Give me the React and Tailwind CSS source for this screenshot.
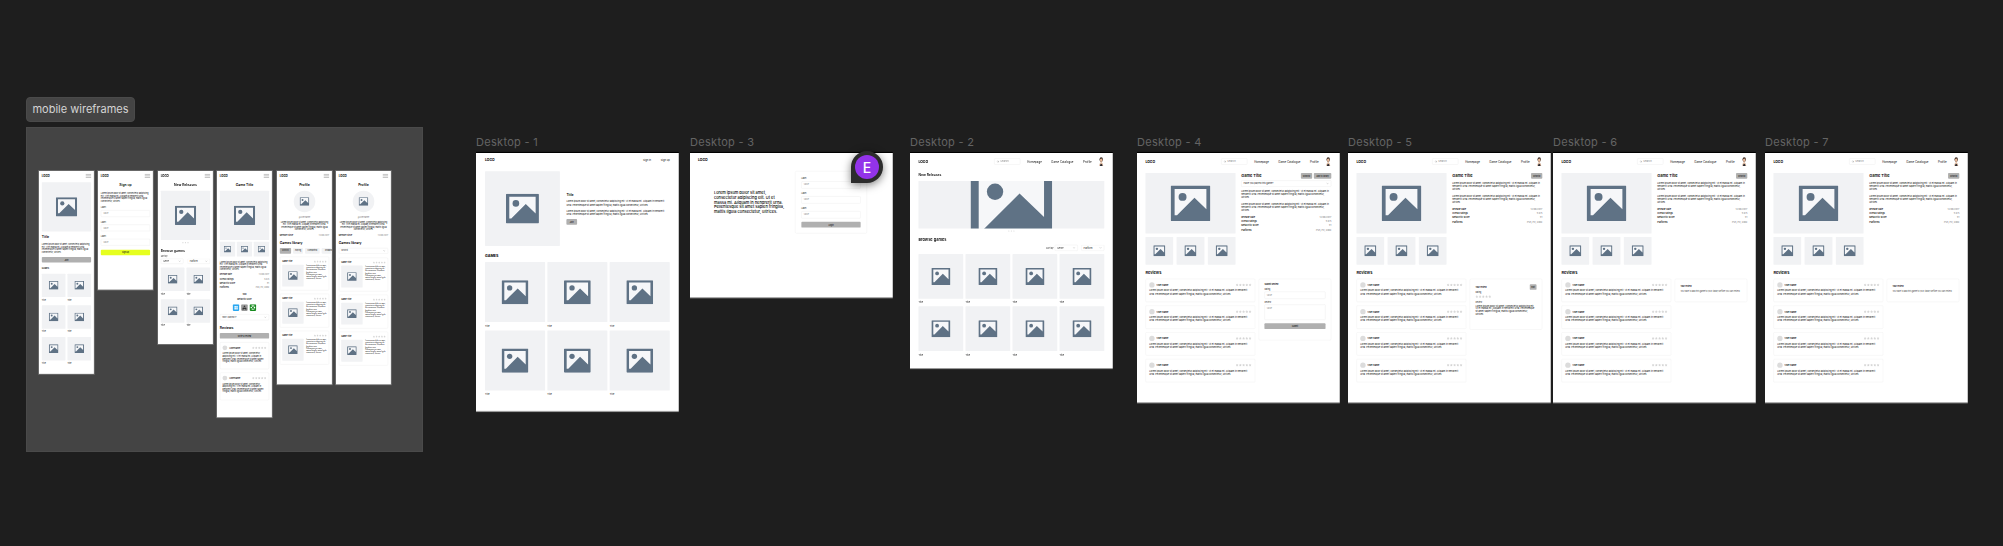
import React from 'react';
import { Search, ChevronDown, Star } from 'lucide-react';

const LOREM = 'Lorem ipsum dolor sit amet, consectetur adipiscing elit. Ut et massa mi. Aliquam in hendrerit urna. Pellentesque sit amet sapien fringilla, mattis ligula consectetur, ultrices.';

// placeholder picture glyph
const PicIcon = ({ className = '' }) => (
  <svg viewBox="0 0 100 90" className={`shrink-0 ${className}`}>
    <rect x="8" y="7" width="84" height="70" fill="#f6f7f9" />
    <path fillRule="evenodd" fill="#5f7285" d="M3 0h94a3 3 0 0 1 3 3v84a3 3 0 0 1-3 3H3a3 3 0 0 1-3-3V3a3 3 0 0 1 3-3zM10 9v66h6l44-44 30 29V9z" />
    <circle cx="30" cy="29" r="10" fill="#5f7285" />
  </svg>
);

const Tile = ({ className = '', icon = '' }) => (
  <div className={`flex items-center justify-center overflow-hidden rounded-[4px] bg-[#f1f2f4] ${className}`}>
    <PicIcon className={icon} />
  </div>
);

const Stars = ({ className = 'w-[16px] h-[16px]' }) => (
  <div className="flex gap-[3px]">
    {[0, 1, 2, 3, 4].map(i => (
      <Star key={i} className={`${className} fill-[#d9d9d9] text-[#d9d9d9]`} />
    ))}
  </div>
);

const Dots = () => (
  <div className="flex justify-center gap-[10px]">
    {[0, 1, 2].map(i => (
      <span key={i} className="h-[8px] w-[8px] rounded-full bg-[#d4d4d4]" />
    ))}
  </div>
);

const SelectBox = ({ label, className = '', text = 'text-[16px]' }) => (
  <div className={`flex items-center justify-between rounded-[6px] border-[3px] border-[#ececec] bg-white px-[14px] text-[#222] ${text} ${className}`}>
    <span>{label}</span>
    <ChevronDown className="h-[20px] w-[20px] text-[#666]" />
  </div>
);

const Field = ({ label = 'Label', value = 'Value', box = 'h-[52px]', labelClass = 'text-[14px] leading-[20px]', gap = 'mt-[10px]' }) => (
  <div>
    <div className={`text-[#222] ${labelClass}`}>{label}</div>
    <div className={`${gap} rounded-[6px] border-[3px] border-[#ececec] px-[14px] py-[11px] text-[14px] leading-[20px] text-[#888] ${box}`}>{value}</div>
  </div>
);

const GrayButton = ({ children, className = '' }) => (
  <div className={`flex items-center justify-center rounded-[6px] bg-[#b0b0b0] font-medium text-[#111] ${className}`}>{children}</div>
);

const Face = () => (
  <svg viewBox="0 0 44 64" className="h-[64px] w-[44px]">
    <ellipse cx="22" cy="18" rx="12" ry="16" fill="#3a2a22" />
    <ellipse cx="22" cy="21" rx="9" ry="11" fill="#e8b899" />
    <rect x="18" y="30" width="8" height="10" fill="#dba988" />
    <path d="M8 64c0-14 6-26 14-26s14 12 14 26z" fill="#d8b69d" />
    <path d="M13 64c1-9 4-14 9-14s8 5 9 14z" fill="#2c2c33" />
  </svg>
);

const Logo = () => <span className="text-[24px] font-bold leading-[32px] text-black">LOGO</span>;

const AppHeader = () => (
  <div className="flex h-[45px] items-center justify-between">
    <Logo />
    <div className="flex items-center text-[20px] text-[#111]">
      <div className="flex h-[45px] w-[186px] items-center gap-[8px] rounded-[6px] border-[3px] border-[#ececec] px-[14px] text-[18px] text-[#888]">
        <Search className="h-[18px] w-[18px]" />
        <span>Search</span>
      </div>
      <span className="ml-[48px]">Homepage</span>
      <span className="ml-[68px]">Game Catalogue</span>
      <span className="ml-[68px]">Profile</span>
      <div className="ml-[46px]"><Face /></div>
    </div>
  </div>
);

const GameTile = ({ size, icon }) => (
  <div>
    <Tile className={size} icon={icon} />
    <div className="mt-[16px] text-[16px] leading-[20px] text-[#111]">Title</div>
  </div>
);

const InfoRows = ({ className = 'gap-[11px] text-[16px] leading-[20px]' }) => (
  <div className={`flex flex-col ${className}`}>
    {[['Release date', '12/08/2017'], ['Overall ratings', '5.0/5'], ['Metacritic score', '91'], ['Platforms', 'PS5, PC, Xbox']].map(([k, v]) => (
      <div key={k} className="flex justify-between">
        <span className="font-medium text-black">{k}</span>
        <span className="text-[#777]">{v}</span>
      </div>
    ))}
  </div>
);

const ReviewCard = () => (
  <div className="h-[166px] rounded-[8px] border-[3px] border-[#efefef] px-[24px] pt-[22px]">
    <div className="flex items-center justify-between">
      <div className="flex items-center gap-[14px]">
        <span className="h-[38px] w-[38px] rounded-full bg-[#dcdcdc]" />
        <span className="text-[16px] font-semibold text-black">User name</span>
      </div>
      <Stars className="h-[20px] w-[20px]" />
    </div>
    <p className="mt-[10px] text-[16px] leading-[22px] text-black">{LOREM}</p>
  </div>
);

// the game page shared by Desktop 4 to 7, the top right action and the side card change
const GamePage = ({ actions, beforeText, side }) => (
  <div className="px-[60px] pt-[38px]">
    <AppHeader />
    <div className="mt-[59px] flex gap-[40px]">
      <div className="w-[640px]">
        <Tile className="h-[430px]" icon="w-[282px]" />
        <div className="mt-[24px] grid grid-cols-3 gap-[24px]">
          <Tile className="h-[197px]" icon="w-[85px]" />
          <Tile className="h-[197px]" icon="w-[85px]" />
          <Tile className="h-[197px]" icon="w-[85px]" />
        </div>
      </div>
      <div className="w-[640px]">
        <div className="flex items-center justify-between">
          <h3 className="text-[28px] font-semibold leading-[40px] text-black">Game Title</h3>
          <div className="flex gap-[12px]">{actions}</div>
        </div>
        {beforeText}
        <p className="mt-[20px] text-[16px] leading-[22px] text-black">{LOREM}</p>
        <p className="mt-[28px] text-[16px] leading-[22px] text-black">{LOREM}</p>
        <div className="mt-[24px]"><InfoRows /></div>
      </div>
    </div>
    <h3 className="mt-[40px] text-[28px] font-semibold leading-[36px] text-black">Reviews</h3>
    <div className="mt-[24px] flex items-start gap-[24px]">
      <div className="flex w-[780px] flex-col gap-[24px]">
        <ReviewCard />
        <ReviewCard />
        <ReviewCard />
        <ReviewCard />
      </div>
      <div className="w-[516px]">{side}</div>
    </div>
  </div>
);

const SmallAction = ({ children, className = 'w-[80px]' }) => (
  <GrayButton className={`h-[40px] text-[14px] ${className}`}>{children}</GrayButton>
);

const SideCard = ({ children, className = '' }) => (
  <div className={`rounded-[10px] border-[3px] border-[#efefef] px-[38px] ${className}`}>{children}</div>
);

const Hamburger = () => (
  <div className="flex w-[38px] flex-col gap-[8px]">
    <span className="h-[4px] bg-[#999]" />
    <span className="h-[4px] bg-[#999]" />
    <span className="h-[4px] bg-[#999]" />
  </div>
);

const MobileHeader = () => (
  <div className="flex h-[36px] items-center justify-between">
    <span className="text-[20px] font-bold text-black">LOGO</span>
    <Hamburger />
  </div>
);

const MobileTitle = ({ children }) => (
  <h3 className="mt-[34px] text-center text-[24px] font-semibold leading-[28px] text-black">{children}</h3>
);

const MobileTile = () => (
  <div>
    <Tile className="h-[166px]" icon="w-[68px]" />
    <div className="mt-[13px] text-[14px] leading-[18px] text-[#111]">Title</div>
  </div>
);

const MobileReview = ({ className = '' }) => (
  <div className={`rounded-[8px] border-[3px] border-[#efefef] px-[16px] pt-[20px] ${className}`}>
    <div className="flex items-center justify-between">
      <div className="flex items-center gap-[14px]">
        <span className="h-[34px] w-[34px] rounded-full bg-[#dcdcdc]" />
        <span className="text-[16px] font-medium text-black">Username</span>
      </div>
      <Stars className="h-[18px] w-[18px]" />
    </div>
    <p className="mt-[16px] text-[14px] leading-[18px] text-black">{LOREM}</p>
  </div>
);

const LibraryCard = () => (
  <div className="h-[241px] rounded-[8px] border-[3px] border-[#efefef] px-[14px] pt-[22px]">
    <div className="flex items-center justify-between">
      <span className="text-[14px] font-semibold leading-[20px] text-black">Game Title</span>
      <Stars className="h-[16px] w-[16px]" />
    </div>
    <div className="mt-[12px] flex gap-[18px]">
      <Tile className="h-[156px] w-[152px] shrink-0" icon="w-[68px]" />
      <p className="text-[11px] leading-[15px] text-black">{LOREM}</p>
    </div>
  </div>
);

const ProfileHead = () => (
  <>
    <MobileTitle>Profile</MobileTitle>
    <div className="mx-auto mt-[25px] flex h-[153px] w-[153px] items-center justify-center rounded-full bg-[#f1f2f4]">
      <PicIcon className="w-[68px]" />
    </div>
    <div className="mt-[26px] text-center text-[14px] leading-[20px] text-[#777]">@username</div>
    <p className="mt-[16px] text-center text-[14px] leading-[17px] text-black">{LOREM}</p>
    <div className="mt-[22px] flex justify-between text-[14px] leading-[20px]">
      <span className="font-medium text-black">Member since</span>
      <span className="text-[#777]">12/08/2017</span>
    </div>
    <h3 className="mt-[30px] text-[24px] font-semibold leading-[28px] text-black">Games library</h3>
  </>
);

const Label = ({ className, children }) => (
  <div className={`absolute whitespace-nowrap text-[11px] leading-[14px] tracking-[0.3px] text-[#646464] ${className}`}>{children}</div>
);

const Frame = ({ className, height, children }) => (
  <div className={`absolute ${className}`}>
    <div className={`w-[1440px] origin-top-left scale-[0.1408] overflow-hidden bg-white shadow-[0_8px_0_#9a9a9a,0_-8px_0_#000] ${height}`}>
      {children}
    </div>
  </div>
);

const MobileFrame = ({ className, height, children }) => (
  <div className={`absolute ${className}`}>
    <div className={`w-[390px] origin-top-left scale-[0.1408] overflow-hidden bg-white px-[20px] pt-[17px] shadow-[0_0_0_6px_#707070] ${height}`}>
      {children}
    </div>
  </div>
);

export default function App() {
  return (
    <div className="relative h-[546px] w-[2003px] overflow-hidden bg-[#1e1e1e] font-['Inter',sans-serif]">
      {/* mobile section */}
      <div className="absolute left-[26px] top-[97px] flex h-[25px] w-[109px] items-center justify-center whitespace-nowrap rounded-[4px] border border-[#4a4a4a] bg-[#444444] text-[11px] text-[#d4d4d4]">
        mobile wireframes
      </div>
      <div className="absolute left-[26px] top-[127px] h-[325px] w-[397px] border border-[#4a4a4a] bg-[#444444]" />

      <MobileFrame className="left-[38.5px] top-[170.5px]" height="h-[1441px]">
        <MobileHeader />
        <Tile className="mt-[27px] h-[350px]" icon="w-[151px]" />
        <h3 className="mt-[25px] text-[24px] font-semibold leading-[28px] text-black">Title</h3>
        <p className="mt-[28px] text-[14px] leading-[19px] text-black">{LOREM}</p>
        <GrayButton className="mt-[24px] h-[38px] text-[14px]">Join</GrayButton>
        <div className="mt-[34px] text-[14px] font-semibold leading-[20px] text-black">GAMES</div>
        <div className="mt-[26px] grid grid-cols-2 gap-x-[14px] gap-y-[28px]">
          {[0, 1, 2, 3, 4, 5].map(i => <MobileTile key={i} />)}
        </div>
      </MobileFrame>

      <MobileFrame className="left-[98px] top-[170.5px]" height="h-[843px]">
        <MobileHeader />
        <MobileTitle>Sign up</MobileTitle>
        <p className="mt-[37px] text-[14px] leading-[18px] text-black">{LOREM}</p>
        <div className="mt-[26px] flex flex-col gap-[26px]">
          <Field box="h-[48px]" labelClass="text-[14px] leading-[18px]" />
          <Field box="h-[48px]" labelClass="text-[14px] leading-[18px]" />
          <Field box="h-[48px]" labelClass="text-[14px] leading-[18px]" />
        </div>
        <div className="mt-[30px] flex h-[38px] items-center justify-center rounded-[6px] bg-[#e6ff1f] text-[14px] font-medium text-[#111]">Sign up</div>
      </MobileFrame>

      <MobileFrame className="left-[157.5px] top-[170.5px]" height="h-[1229px]">
        <MobileHeader />
        <MobileTitle>New Releases</MobileTitle>
        <Tile className="mt-[25px] h-[350px]" icon="w-[151px]" />
        <div className="mt-[15px]"><Dots /></div>
        <h3 className="mt-[40px] text-[24px] font-semibold leading-[28px] text-black">Browse games</h3>
        <div className="mt-[16px] text-[14px] leading-[18px] text-[#222]">Sort by</div>
        <div className="mt-[7px] flex justify-between">
          <SelectBox label="Genre" className="h-[38px] w-[161px]" text="text-[14px]" />
          <SelectBox label="Platform" className="h-[38px] w-[161px]" text="text-[14px]" />
        </div>
        <div className="mt-[26px] grid grid-cols-2 gap-x-[14px] gap-y-[28px]">
          {[0, 1, 2, 3].map(i => <MobileTile key={i} />)}
        </div>
      </MobileFrame>

      <MobileFrame className="left-[217px] top-[170.5px]" height="h-[1749px]">
        <MobileHeader />
        <MobileTitle>Game Title</MobileTitle>
        <Tile className="mt-[25px] h-[350px]" icon="w-[151px]" />
        <div className="mt-[12px] grid grid-cols-3 gap-[12px]">
          <Tile className="h-[106px]" icon="w-[50px]" />
          <Tile className="h-[106px]" icon="w-[50px]" />
          <Tile className="h-[106px]" icon="w-[50px]" />
        </div>
        <p className="mt-[28px] text-[14px] leading-[18px] text-black">{LOREM}</p>
        <div className="mt-[20px]"><InfoRows className="gap-[12px] text-[14px] leading-[18px]" /></div>
        <div className="mt-[32px] text-center text-[16px] font-semibold leading-[20px] text-black">100</div>
        <div className="mt-[12px] text-center text-[13px] font-medium leading-[18px] text-black">Metacritic Score</div>
        <div className="mt-[28px] flex justify-center gap-[12px]">
          <svg viewBox="0 0 48 48" className="h-[48px] w-[48px]">
            <rect width="48" height="48" rx="8" fill="#2aa7f0" />
            <path d="M13 12h10v11H13zM26 12h10v11H26zM13 26h10v11H13zM26 26h10v11H26z" fill="#fff" />
          </svg>
          <svg viewBox="0 0 48 48" className="h-[48px] w-[48px]">
            <rect width="48" height="48" rx="8" fill="#9a9a9a" />
            <path d="M24 8l8 14h-6l-2-4-2 4h-6zM12 26h24l4 12h-10l-6-6-6 6H8z" fill="#333" />
          </svg>
          <svg viewBox="0 0 48 48" className="h-[48px] w-[48px]">
            <rect width="48" height="48" rx="8" fill="#168a1e" />
            <circle cx="24" cy="24" r="16" fill="#fff" />
            <path d="M24 20l-9-9-5 6 10 7-10 8 5 5 9-9 9 9 5-5-10-8 10-7-5-6z" fill="#168a1e" />
          </svg>
        </div>
        <SelectBox label="Have I played it?" className="mt-[23px] h-[43px]" text="text-[13px]" />
        <h3 className="mt-[38px] text-[24px] font-semibold leading-[28px] text-black">Reviews</h3>
        <GrayButton className="mt-[24px] h-[40px] text-[14px]">Write a review</GrayButton>
        <MobileReview className="mt-[26px] h-[192px]" />
        <MobileReview className="mt-[23px] h-[197px]" />
      </MobileFrame>

      <MobileFrame className="left-[276.5px] top-[170.5px]" height="h-[1515px]">
        <MobileHeader />
        <ProfileHead />
        <div className="mt-[24px] flex gap-[14px] text-[13px] text-[#111]">
          <div className="flex h-[40px] w-[80px] shrink-0 items-center justify-center rounded-[6px] bg-[#b0b0b0]">Wishlist</div>
          <div className="flex h-[40px] w-[71px] shrink-0 items-center justify-center rounded-[6px] bg-[#f1f2f4]">Playing</div>
          <div className="flex h-[40px] w-[104px] shrink-0 items-center justify-center rounded-[6px] bg-[#f1f2f4]">Completed</div>
          <div className="flex h-[40px] w-[100px] shrink-0 items-center justify-center rounded-[6px] bg-[#f1f2f4]">Dropped</div>
        </div>
        <div className="mt-[21px] flex flex-col gap-[22px]">
          <LibraryCard />
          <LibraryCard />
          <LibraryCard />
        </div>
      </MobileFrame>

      <MobileFrame className="left-[336px] top-[170.5px]" height="h-[1515px]">
        <MobileHeader />
        <ProfileHead />
        <SelectBox label="Wishlist" className="mt-[24px] h-[40px]" text="text-[13px]" />
        <div className="mt-[28px] flex flex-col gap-[22px]">
          <LibraryCard />
          <LibraryCard />
          <LibraryCard />
        </div>
      </MobileFrame>

      {/* desktop frames */}
      <Label className="left-[476px] top-[135px]">Desktop - 1</Label>
      <Frame className="left-[476px] top-[153px]" height="h-[1832px]">
        <div className="px-[64px] pt-[36px]">
          <div className="flex h-[32px] items-center justify-between">
            <Logo />
            <div className="flex gap-[68px] text-[18px] text-[#111]">
              <span>Sign in</span>
              <span>Sign up</span>
            </div>
          </div>
          <div className="mt-[62px] flex items-center gap-[46px]">
            <Tile className="h-[530px] w-[532px] shrink-0" icon="w-[234px]" />
            <div>
              <h3 className="text-[24px] font-semibold leading-[32px] text-black">Title</h3>
              <p className="mt-[20px] text-[16px] leading-[23px] text-black">{LOREM}</p>
              <p className="mt-[24px] text-[16px] leading-[23px] text-black">{LOREM}</p>
              <GrayButton className="mt-[20px] h-[40px] w-[76px] text-[14px]">Join</GrayButton>
            </div>
          </div>
          <h3 className="mt-[56px] text-[26px] font-bold leading-[32px] text-black">GAMES</h3>
          <div className="mt-[27px] grid grid-cols-3 gap-x-[16px] gap-y-[24px]">
            {[0, 1, 2, 3, 4, 5].map(i => (
              <GameTile key={i} size="h-[426px]" icon="w-[190px]" />
            ))}
          </div>
        </div>
      </Frame>

      <Label className="left-[690px] top-[135px]">Desktop - 3</Label>
      <Frame className="left-[690px] top-[153px]" height="h-[1024px]">
        <div className="px-[57px] pt-[36px]">
          <Logo />
          <div className="mt-[60px] flex items-center pl-[113px]">
            <p className="w-[512px] text-[28px] font-medium leading-[34px] text-black">
              Lorem ipsum dolor sit amet,<br />consectetur adipiscing elit. Ut et<br />massa mi. Aliquam in hendrerit urna.<br />Pellentesque sit amet sapien fringilla,<br />mattis ligula consectetur, ultrices.
            </p>
            <div className="ml-[64px] w-[511px] rounded-[10px] border-[3px] border-[#efefef] px-[42px] py-[40px]">
              <div className="flex flex-col gap-[24px]">
                <Field />
                <Field />
                <Field />
              </div>
              <GrayButton className="mt-[24px] h-[40px] text-[14px]">Login</GrayButton>
            </div>
          </div>
        </div>
      </Frame>

      <Label className="left-[910px] top-[135px]">Desktop - 2</Label>
      <Frame className="left-[910px] top-[153px]" height="h-[1527px]">
        <div className="px-[60px] pt-[38px]">
          <AppHeader />
          <h3 className="mt-[59px] text-[24px] font-semibold leading-[32px] text-black">New Releases</h3>
          <Tile className="mt-[25px] h-[338px]" icon="w-[580px]" />
          <div className="mt-[13px]"><Dots /></div>
          <h3 className="mt-[36px] text-[28px] font-semibold leading-[40px] text-black">Browse games</h3>
          <div className="mt-[18px] flex items-center justify-end text-[16px] text-[#222]">
            <span className="mr-[8px]">Sort by</span>
            <SelectBox label="Genre" className="h-[43px] w-[164px]" />
            <SelectBox label="Platform" className="ml-[24px] h-[43px] w-[164px]" />
          </div>
          <div className="mt-[23px] grid grid-cols-4 gap-x-[16px] gap-y-[17px]">
            {[0, 1, 2, 3, 4, 5, 6, 7].map(i => (
              <GameTile key={i} size="h-[318px]" icon="w-[135px]" />
            ))}
          </div>
        </div>
      </Frame>

      <Label className="left-[1137px] top-[135px]">Desktop - 4</Label>
      <Frame className="left-[1137px] top-[153px]" height="h-[1770px]">
        <GamePage
          actions={<><SmallAction>Wishlist</SmallAction><SmallAction className="w-[124px]">Add to library</SmallAction></>}
          beforeText={<SelectBox label="Have you played this game?" className="mt-[12px] h-[46px]" />}
          side={
            <SideCard className="h-[438px] pt-[28px]">
              <div className="text-[14px] font-semibold leading-[20px] text-black">Submit Review</div>
              <div className="mt-[14px]"><Field label="Rating" box="h-[52px]" gap="mt-[6px]" /></div>
              <div className="mt-[14px]"><Field label="Review" box="h-[110px]" gap="mt-[6px]" /></div>
              <GrayButton className="mt-[24px] h-[40px] text-[14px]">Submit</GrayButton>
            </SideCard>
          }
        />
      </Frame>

      <Label className="left-[1348px] top-[135px]">Desktop - 5</Label>
      <Frame className="left-[1348px] top-[153px]" height="h-[1770px]">
        <GamePage
          actions={<SmallAction>Wishlist</SmallAction>}
          side={
            <SideCard className="h-[362px] pt-[36px]">
              <div className="flex items-center justify-between">
                <span className="text-[14px] font-semibold text-black">Your review</span>
                <SmallAction className="w-[48px]">Edit</SmallAction>
              </div>
              <div className="mt-[8px] text-[14px] leading-[20px] text-[#222]">Rating</div>
              <div className="mt-[10px]"><Stars className="h-[20px] w-[20px]" /></div>
              <div className="mt-[18px] text-[14px] leading-[20px] text-[#222]">Review</div>
              <p className="mt-[8px] text-[16px] leading-[19px] text-black">{LOREM}</p>
            </SideCard>
          }
        />
      </Frame>

      <Label className="left-[1553px] top-[135px]">Desktop - 6</Label>
      <Frame className="left-[1553px] top-[153px]" height="h-[1770px]">
        <GamePage
          actions={<SmallAction>Wishlist</SmallAction>}
          side={
            <SideCard className="h-[166px] pt-[38px]">
              <div className="text-[14px] font-semibold leading-[20px] text-black">Your review</div>
              <p className="mt-[18px] text-[14px] leading-[18px] text-[#444]">You have to add this game to your library before you can review.</p>
            </SideCard>
          }
        />
      </Frame>

      <Label className="left-[1765px] top-[135px]">Desktop - 7</Label>
      <Frame className="left-[1765px] top-[153px]" height="h-[1770px]">
        <GamePage
          actions={<SmallAction>Wishlist</SmallAction>}
          side={
            <SideCard className="h-[166px] pt-[38px]">
              <div className="text-[14px] font-semibold leading-[20px] text-black">Your review</div>
              <p className="mt-[18px] text-[14px] leading-[18px] text-[#444]">You have to add this game to your library before you can review.</p>
            </SideCard>
          }
        />
      </Frame>

      {/* collaborator cursor over Desktop 3 */}
      <div className="absolute left-[851px] top-[151px] flex h-[32px] w-[32px] items-center justify-center rounded-[16px] rounded-bl-none bg-[#2c2c2c] shadow-[0_2px_8px_rgba(0,0,0,0.5)]">
        <div className="flex h-[24px] w-[24px] items-center justify-center rounded-full bg-[#9333ea] text-[14px] font-medium text-white">E</div>
      </div>
    </div>
  );
}
